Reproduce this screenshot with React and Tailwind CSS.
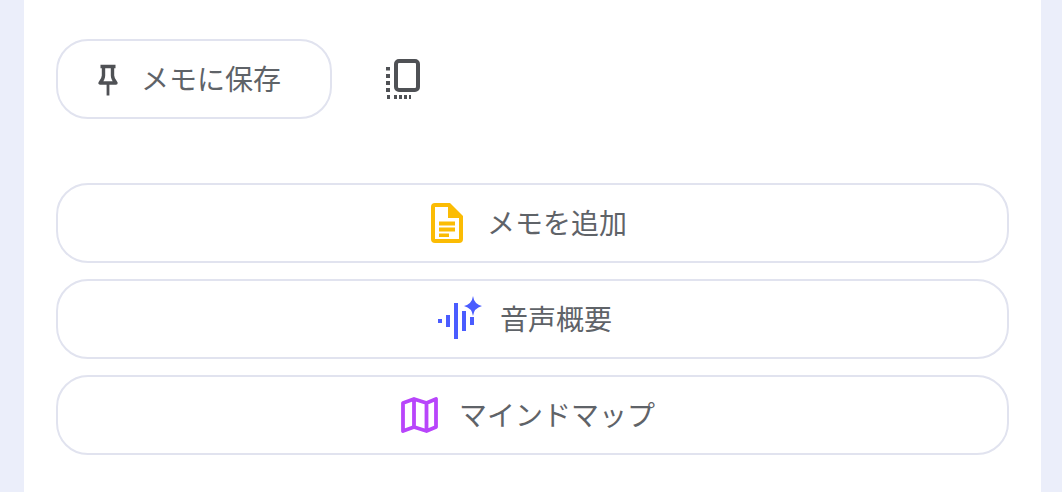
import React from 'react';

const PinIcon = () => (
  <svg width="40" height="40" viewBox="0 0 40 40" fill="none" className="text-[#4f5155]">
    <path d="M12.500 7.500h15M15.500 7.500v9c0 2.800-1.600 5.200-3.500 7.500h16c-1.900-2.300-3.500-4.700-3.500-7.500v-9" stroke="currentColor" strokeWidth="3.400" strokeLinejoin="round" />
    <path d="M20 24v12.500" stroke="currentColor" strokeWidth="2.800" />
  </svg>
);

const CopyIcon = () => (
  <svg width="40" height="40" viewBox="0 0 40 40" fill="none" className="text-[#4f5155]">
    <rect x="13" y="2" width="22" height="29" rx="3" stroke="currentColor" strokeWidth="4" />
    <g fill="currentColor">
      <rect x="3" y="8" width="4" height="3.500" />
      <rect x="3" y="15" width="4" height="4" />
      <rect x="3" y="22" width="4" height="4" />
      <rect x="3" y="29" width="4" height="4" />
      <rect x="4" y="36" width="3" height="4" />
      <rect x="11" y="36" width="3" height="4" />
      <rect x="16" y="36" width="3" height="4" />
      <rect x="21" y="36" width="3" height="4" />
      <rect x="26" y="36" width="2" height="4" />
    </g>
  </svg>
);

const DocIcon = () => (
  <svg width="40" height="40" viewBox="0 0 40 40" fill="none">
    <path d="M9 0h14l13 13v23a4 4 0 0 1-4 4H8a4 4 0 0 1-4-4V4a4 4 0 0 1 4-4z" fill="#fbbc04" />
    <path d="M8 4h13v11h11v21H8z" fill="#ffffff" />
    <path d="M12 18.500h16v4H12zM12 24.500h16v4H12zM12 30.500h10v3.500H12z" fill="#fbbc04" />
  </svg>
);

const AudioIcon = () => (
  <svg width="44" height="40" viewBox="0 0 44 40" fill="#4a5cff" className="-ml-1 -mr-[2px] shrink-0 overflow-visible">
    <rect x="0" y="20" width="4" height="4" />
    <rect x="8" y="16" width="4" height="12" />
    <rect x="16" y="4" width="4" height="36" />
    <rect x="24" y="12" width="4" height="20" />
    <rect x="32" y="18" width="4" height="8" />
    <path d="M35 -3Q36 5 44 7 36 9 35 17 34 9 26 7 34 5 35 -3z" />
  </svg>
);

const MapIcon = () => (
  <svg width="40" height="40" viewBox="0 0 40 40" fill="none">
    <path d="M4 8l11-4 12.500 4L37 4v28l-9.500 4L15 32 4 36zM15 4v28M27.500 8v28" stroke="#b845fb" strokeWidth="3.800" strokeLinejoin="round" />
  </svg>
);

const WideButton = ({ icon, label }) => (
  <button className="flex h-20 w-full items-center justify-center gap-5 rounded-[32px] border-2 border-[#e1e3ef] bg-white pr-[11px] text-[28px] leading-none text-[#5f6368]">
    {icon}
    <span className="pt-1">{label}</span>
  </button>
);

export default function App() {
  return (
    <div className="h-[492px] overflow-hidden bg-[#ebeefa] pl-6 pr-[21px] font-['Roboto','Noto_Sans_CJK_JP',sans-serif]">
      <div className="h-full bg-white px-8 pt-[39px]">
        {/* top actions */}
        <div className="flex items-center gap-[51px]">
          <button className="flex h-20 items-center gap-[13px] rounded-[32px] border-2 border-[#e1e3ef] bg-white pl-[30px] pr-[49px] text-[28px] leading-none text-[#5f6368]">
            <PinIcon />
            <span className="pt-1">メモに保存</span>
          </button>
          <button className="flex h-10 w-10 items-center justify-center">
            <CopyIcon />
          </button>
        </div>

        <div className="mt-16 flex flex-col gap-4">
          <WideButton icon={<DocIcon />} label="メモを追加" />
          <WideButton icon={<AudioIcon />} label="音声概要" />
          <WideButton icon={<MapIcon />} label="マインドマップ" />
        </div>
      </div>
    </div>
  );
}
